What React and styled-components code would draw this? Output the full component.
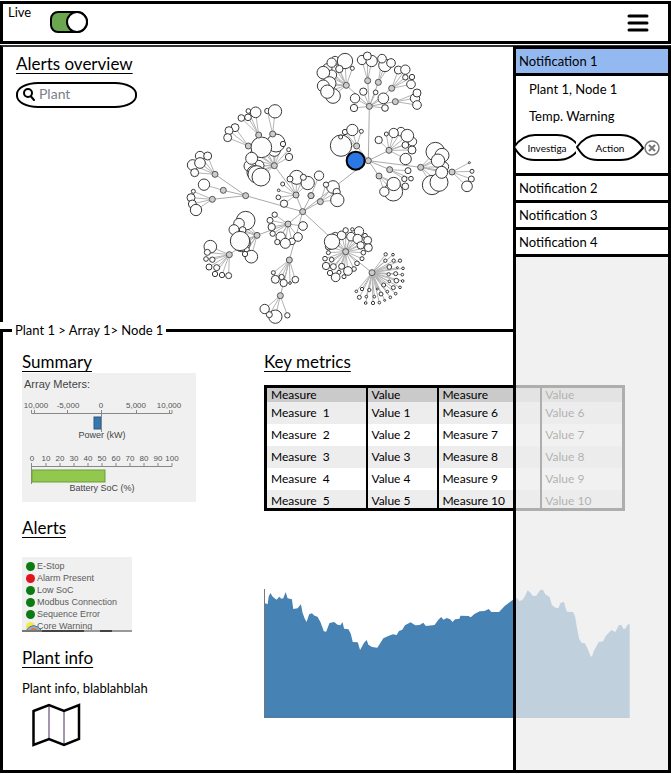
import React, { useState } from 'react';
import styled, { createGlobalStyle } from 'styled-components';

const GlobalStyle = createGlobalStyle`
  * { box-sizing: border-box; }
  body {
    margin: 0;
    background: #fff;
    color: #000;
    font: 13px/16px Lato, "Open Sans", sans-serif;
  }
  button, input { font: inherit; color: inherit; }
`;

const Page = styled.div`
  display: flex;
  flex-direction: column;
  min-height: 100vh;
  padding: 1px 0;
`;

const Header = styled.header`
  display: flex;
  justify-content: space-between;
  align-items: flex-start;
  height: 43px;
  padding: 0 18px 0 5px;
  border: 3px solid #000;
`;

const LiveLabel = styled.label`
  display: flex;
  align-items: flex-start;
  gap: 19px;
`;

const Toggle = styled.input`
  appearance: none;
  display: flex;
  justify-content: flex-end;
  width: 38px;
  height: 22px;
  margin: 7px 0 0;
  border: 2px solid #000;
  border-radius: 8px 11px 11px 8px;
  background: #fff;
  &:checked { background: #6aa84f; }
  &:not(:checked) { justify-content: flex-start; }
  &::before {
    content: '';
    box-sizing: border-box;
    flex: none;
    width: 22px;
    height: 22px;
    margin: -2px;
    border: 2px solid #000;
    border-radius: 50%;
    background: #fff;
  }
`;

const IconButton = styled.button`
  display: flex;
  padding: 0;
  border: 0;
  background: none;
  cursor: pointer;
`;

const MenuButton = styled(IconButton)`
  align-self: center;
`;

const Body = styled.main`
  position: relative;
  flex: 1;
  display: flex;
  flex-direction: column;
  margin-top: 1px;
`;

const Overview = styled.section`
  display: flex;
  height: 277px;
  border-top: 2px solid #333;
  border-left: 3px solid #000;
  border-right: 3px solid #000;
`;

const Search = styled.div`
  flex: 0 0 177px;
  padding: 7px 0 0 13px;
`;

const Heading = styled.h2`
  margin: 0;
  font-size: 17px;
  font-weight: 400;
  line-height: 20px;
  text-decoration: underline;
  text-decoration-skip-ink: none;
  text-underline-offset: 3px;
`;

const SearchBox = styled.label`
  display: flex;
  align-items: center;
  gap: 4px;
  width: 121px;
  height: 26px;
  margin-top: 8px;
  padding: 0 5px 2px;
  border: 2px solid #000;
  border-radius: 22px / 12px;
`;

const SearchInput = styled.input`
  width: 80px;
  padding: 0;
  border: 0;
  outline: 0;
  background: none;
  font-size: 14px;
  &::placeholder { color: #7d7d88; opacity: 1; }
`;

const Graph = styled.svg`
  width: 300px;
  height: 275px;
  overflow: visible;
`;

const Details = styled.fieldset`
  flex: 1;
  min-width: 0;
  margin: 0;
  padding: 14px 38px 20px 19px;
  border: 3px solid #000;
`;

const Legend = styled.legend`
  margin-left: -10px;
  padding: 0 3px;
  font-size: 13px;
  line-height: 16px;
`;

const Columns = styled.div`
  display: grid;
  grid-template-columns: 242px 1fr;
`;

const Column = styled.div`
  display: flex;
  flex-direction: column;
  align-items: flex-start;
`;

const Meters = styled.svg`
  width: 174px;
  height: 129px;
  margin: 1px 0 16px;
  background: #f0f0f0;
  font-family: "Liberation Sans", Arial, sans-serif;
`;

const AlertCard = styled.div`
  position: relative;
  width: 110px;
  height: 75px;
  margin: 19px 0 16px;
  overflow: hidden;
  background: #f0f0f0;
`;

const AlertList = styled.ul`
  margin: 0;
  padding: 3px 4px;
  list-style: none;
  color: #5c5c5c;
  font: 9px/12px "Liberation Sans", Arial, sans-serif;
`;

const AlertItem = styled.li`
  display: flex;
  align-items: center;
  gap: 2px;
  white-space: nowrap;
  &::before {
    content: '';
    width: 9px;
    height: 9px;
    border-radius: 50%;
    background: ${(p) => p.$color};
  }
`;

const CardEdge = styled.svg`
  position: absolute;
  left: 0;
  bottom: 0;
`;

const PlantText = styled.p`
  margin: 12px 0 7px;
`;

const Metrics = styled.table`
  width: calc(100% - 5px);
  margin-top: 13px;
  table-layout: fixed;
  border: 3px solid #000;
  border-spacing: 0;
  font-size: 12px;
  line-height: 14px;
  text-align: left;
  white-space: pre;
`;

const Cell = styled.td`
  height: ${(p) => (p.$last ? 18 : 22)}px;
  padding: ${(p) => (p.$last ? '3px 0 0' : '0 0 0')};
  padding-left: 3px;
  border-left: 2px solid #000;
  &:first-child { padding-left: 4px; border-left: 0; }
`;

const HeadCell = styled.th`
  width: ${(p) => p.$width};
  height: 14px;
  padding: 0 0 0 3px;
  border-left: 2px solid #000;
  background: #cacaca;
  font-weight: 400;
  &:first-child { padding-left: 4px; border-left: 0; }
`;

const Row = styled.tr`
  background: ${(p) => (p.$shaded ? '#ededed' : '#fff')};
`;

const Chart = styled.svg`
  width: 100%;
  height: 130px;
  margin-top: 77px;
`;

const Sidebar = styled.aside`
  position: absolute;
  top: 1px;
  right: 0;
  bottom: 0;
  display: flex;
  flex-direction: column;
  width: 158px;
  border: 3px solid #000;
`;

const Notice = styled.button`
  display: block;
  width: 100%;
  height: 27px;
  padding: 0 0 0 3px;
  border: 0;
  border-bottom: 3px solid #000;
  background: ${(p) => (p.$open ? '#94b9f1' : '#fff')};
  text-align: left;
  cursor: pointer;
`;

const NoticeDetail = styled.div`
  height: 100px;
  border-bottom: 3px solid #000;
  background: #fff;
`;

const NoticeText = styled.p`
  margin: 0;
  padding: 5px 0 6px 13px;
`;

const Actions = styled.div`
  display: flex;
  align-items: center;
  margin: 4px 0 0 -3px;
`;

const LensButton = styled.button`
  position: relative;
  display: block;
  width: 68px;
  height: 27px;
  padding: 0;
  border: 0;
  background: none;
  font-size: 10px;
  cursor: pointer;
`;

const LensOutline = styled.svg`
  position: absolute;
  inset: 0;
`;

const ButtonText = styled.span`
  position: relative;
`;

const Clip = styled.div`
  width: 63px;
  overflow: hidden;
`;

const Veil = styled.div`
  flex: 1;
  background: linear-gradient(#f1f1f1 90px, rgba(236, 236, 236, 0.737) 90px);
`;

/* Node positions are in thirds of a pixel, relative to each group's origin. */
const GROUPS = [
  { dx: 0, dy: 0, hubs: [
    { at: [236, 270], leaves: [[227, 202, 16], [205, 198, 7], [204, 217, 10], [184, 219, 10]] },
    { at: [278, 267], leaves: [[262, 198, 8], [285, 199, 20]] },
    { at: [205, 303], leaves: [[165, 248, 12], [147, 257, 12], [143, 278, 12]] },
    { at: [283, 362], leaves: [[225, 325, 13], [283, 316, 18], [288, 294, 27], [244, 307, 31], [309, 297, 8], [326, 314, 6], [327, 336, 11], [236, 362, 16], [210, 363, 18], [215, 340, 18], [222, 383, 21], [230, 388, 26], [243, 396, 27]] },
    { at: [105, 388], leaves: [[60, 333, 14], [83, 333, 12], [38, 360, 16], [60, 354, 16], [44, 383, 12]] },
  ] },
  { dx: 0, dy: 375, hubs: [
    { at: [197, 77], leaves: [] },
    { at: [130, 61], leaves: [[72, 44, 17]] },
    { at: [97, 88], leaves: [[40, 64, 6], [33, 83, 12], [37, 102, 12], [48, 120, 17]] },
    { at: [348, 75], leaves: [[308, 42, 6], [296, 61, 4], [295, 82, 7], [312, 101, 11], [350, 22, 21], [330, 27, 9], [383, 39, 20], [370, 22, 9]] },
    { at: [393, 77], leaves: [[417, 17, 14]] },
    { at: [324, 162], leaves: [[284, 134, 8], [270, 151, 9], [275, 171, 11], [278, 191, 8], [302, 200, 14], [292, 216, 8], [336, 214, 10], [316, 220, 15], [354, 201, 13], [369, 168, 13]] },
    { at: [231, 196], leaves: [[197, 152, 28], [177, 161, 16], [188, 180, 10], [162, 179, 15], [185, 219, 26], [200, 238, 8], [180, 213, 29], [214, 260, 19], [195, 252, 8]] },
    { at: [148, 254], leaves: [[91, 230, 19], [82, 247, 9], [78, 267, 7], [97, 269, 8], [87, 291, 9], [110, 293, 9], [105, 312, 8], [126, 315, 8], [146, 317, 9]] },
    { at: [328, 270], leaves: [[280, 308, 6], [286, 328, 12], [305, 321, 8], [311, 339, 11], [330, 339, 4], [346, 329, 10]] },
    { at: [301, 377], leaves: [[254, 417, 14], [286, 440, 20], [268, 434, 9], [322, 436, 8]] },
    { at: [368, 125], leaves: [] },
  ] },
  { dx: 360, dy: 0, hubs: [
    { at: [139, 121], leaves: [[82, 70, 14], [105, 47, 13], [95, 53, 14], [135, 48, 23], [118, 72, 11], [157, 70, 6], [95, 90, 15], [70, 83, 19], [88, 115, 20], [70, 123, 18], [99, 153, 22], [82, 140, 20]] },
    { at: [203, 107], leaves: [[186, 45, 14], [215, 48, 17], [202, 33, 12]] },
    { at: [235, 112], leaves: [[255, 61, 19], [246, 41, 13], [273, 54, 13]] },
    { at: [275, 130], leaves: [[295, 75, 12], [316, 74, 14], [316, 97, 8], [336, 96, 8], [333, 118, 13]] },
    { at: [286, 170], leaves: [[345, 160, 14], [351, 144, 12], [351, 180, 13]] },
    { at: [208, 184], leaves: [[190, 140, 11], [227, 142, 7], [250, 160, 16], [255, 189, 10], [165, 160, 14], [162, 189, 11]] },
    { at: [205, 347], leaves: [] },
    { at: [170, 303], leaves: [[123, 302, 32], [122, 276, 6], [135, 261, 8], [157, 255, 17], [184, 259, 6]] },
    { at: [267, 316], leaves: [[236, 285, 11], [259, 267, 6], [303, 260, 13], [281, 264, 14], [337, 290, 13], [322, 272, 19], [316, 300, 10], [336, 315, 12], [317, 342, 17]] },
    { at: [269, 374], leaves: [[324, 377, 9], [313, 402, 8], [333, 401, 7]] },
    { at: [237, 393], leaves: [[280, 440, 28], [253, 440, 14], [281, 417, 20], [316, 424, 10]] },
    { at: [362, 367], leaves: [[406, 320, 28], [426, 331, 21], [432, 365, 14], [414, 347, 20], [396, 420, 29], [417, 412, 27], [425, 382, 18]] },
    { at: [456, 381], leaves: [[508, 353, 3], [516, 379, 6], [514, 402, 9], [501, 424, 16]] },
  ] },
  { dx: 360, dy: 375, hubs: [
    { at: [61, 95], leaves: [[99, 51, 19], [78, 44, 8], [110, 66, 11], [112, 90, 20]] },
    { at: [33, 77], leaves: [] },
    { at: [137, 245], leaves: [[106, 199, 12], [86, 230, 10], [96, 215, 23], [125, 196, 13], [137, 181, 8], [157, 178, 5], [177, 184, 14], [153, 200, 13], [173, 207, 14], [195, 197, 7], [203, 211, 12], [205, 233, 12], [182, 226, 11], [190, 248, 7], [186, 266, 6], [171, 280, 7], [162, 297, 7], [144, 303, 13], [125, 289, 9], [132, 320, 6], [117, 307, 6], [107, 322, 13], [90, 309, 8], [100, 290, 9], [78, 288, 11], [95, 269, 7], [75, 266, 7], [85, 248, 6]] },
    { at: [216, 308], leaves: [[257, 253, 5], [279, 254, 4], [256, 272, 5], [281, 272, 5], [300, 272, 5], [268, 291, 7], [292, 293, 3], [309, 295, 4], [266, 313, 5], [287, 311, 6], [307, 314, 4], [268, 334, 4], [289, 332, 7], [308, 333, 4], [251, 345, 6], [280, 353, 6], [300, 352, 4], [262, 365, 4], [287, 371, 4], [243, 372, 6], [271, 382, 4], [232, 357, 3], [208, 360, 5], [223, 380, 4], [238, 398, 4], [254, 391, 3], [219, 399, 5], [197, 399, 4], [199, 380, 4], [186, 357, 5], [169, 364, 4], [178, 382, 6]] },
  ] },
];

const LINKS = [
  [236, 270, 283, 362], [278, 267, 283, 362], [205, 303, 283, 362], [283, 362, 348, 450],
  [105, 388, 197, 452], [130, 436, 197, 452], [97, 463, 197, 452], [197, 452, 368, 500],
  [348, 450, 368, 500], [393, 452, 368, 500], [421, 470, 368, 500], [324, 537, 368, 500],
  [231, 571, 324, 537], [148, 629, 231, 571], [328, 645, 368, 500], [328, 645, 301, 752],
  [368, 500, 497, 620], [497, 620, 576, 683], [368, 500, 565, 347], [565, 347, 568, 184],
  [568, 184, 499, 121], [568, 184, 563, 107], [568, 184, 595, 112], [568, 184, 635, 130],
  [568, 184, 646, 170], [565, 347, 530, 303], [565, 347, 627, 316], [565, 347, 629, 374],
  [565, 347, 597, 393], [565, 347, 722, 367], [722, 367, 816, 381],
];

function NodeGraph() {
  return (
    <Graph viewBox="0 6 900 825" role="img" aria-label="Plant node network">
      <g stroke="#aaa" strokeWidth="3" fill="none">
        {LINKS.map(([a, b, c, d], i) => <path key={i} d={`M${a} ${b}L${c} ${d}`} />)}
      </g>
      {GROUPS.map((g, i) => (
        <g key={i} transform={`translate(${g.dx} ${g.dy})`}>
          {g.hubs.map((h, j) => (
            <g key={j}>
              <path
                d={h.leaves.map((l) => `M${h.at[0]} ${h.at[1]}L${l[0]} ${l[1]}`).join('')}
                stroke="#b4b4b4" strokeWidth="3" fill="none"
              />
              {h.leaves.map((l, k) => (
                <circle key={k} cx={l[0]} cy={l[1]} r={l[2]} fill="#fdfdfd" stroke="#3a3a3a" strokeWidth="3" />
              ))}
            </g>
          ))}
          {g.hubs.map((h, j) => (
            <circle key={j} cx={h.at[0]} cy={h.at[1]} r="9" fill="#ccc" stroke="#555" strokeWidth="3" />
          ))}
        </g>
      ))}
      <circle cx="527" cy="347" r="27" fill="#2b78e4" stroke="#000" strokeWidth="6" />
    </Graph>
  );
}

function MeterPanel() {
  return (
    <Meters viewBox="0 0 174 129" role="img" aria-label="Array meters">
      <text x="2" y="15" fontSize="11" fill="#444">Array Meters:</text>
      <g fontSize="8" fill="#555" textAnchor="middle">
        <text x="14" y="35">10,000</text>
        <text x="46" y="35">-5,000</text>
        <text x="79" y="35">0</text>
        <text x="114" y="35">5,000</text>
        <text x="147" y="35">10,000</text>
        {[0, 10, 20, 30, 40, 50, 60, 70, 80, 90, 100].map((n) => (
          <text key={n} x={10 + n * 1.4} y="88">{n}</text>
        ))}
      </g>
      <g stroke="#888" fill="none">
        <path d="M9.500 37v3.500h140.500v-3.500M12.500 37v3M45.500 37v3M79.500 37v3M114.500 37v3M147.500 37v3" />
        <path d="M9.500 90v21M9.500 93.500h140.500v-3.500M24 90v3M38 90v3M52 90v3M66 90v3M80 90v3M94 90v3M108 90v3M122 90v3M136 90v3" />
      </g>
      <rect x="72" y="44" width="7" height="12" fill="#3577ae" stroke="#2b5a85" />
      <path d="M79.500 41v18" stroke="#888" />
      <rect x="10" y="97" width="73" height="12" fill="#92c84e" stroke="#6f9b3a" />
      <g fontSize="9" fill="#444" textAnchor="middle">
        <text x="80" y="65">Power (kW)</text>
        <text x="80" y="118">Battery SoC (%)</text>
      </g>
    </Meters>
  );
}

const ALERTS = [
  ['E-Stop', '#0a7a12'], ['Alarm Present', '#e3131b'], ['Low SoC', '#0a7a12'],
  ['Modbus Connection', '#0a7a12'], ['Sequence Error', '#0a7a12'], ['Core Warning', '#f2e94a'],
];

function AlertPanel() {
  return (
    <AlertCard>
      <AlertList>
        {ALERTS.map(([name, color]) => <AlertItem key={name} $color={color}>{name}</AlertItem>)}
      </AlertList>
      <CardEdge width="110" height="8" viewBox="0 0 110 8" aria-hidden="true">
        <path d="M3 8Q11 -5 21 8Z" fill="#8fb0c9" stroke="#5b7690" />
        <path d="M7 8Q11 0 17 8Z" fill="#d9764a" />
        <path d="M0 7h22" stroke="#777" strokeWidth="2" />
        <path d="M20 7h42M78 7h12" stroke="#444" strokeWidth="2" />
        <path d="M62 7h16M90 7h20" stroke="#999" strokeWidth="2" />
      </CardEdge>
    </AlertCard>
  );
}

const AREA =
  'M27 412V68L38 73L41 50L46 39L54 51L65 59L73 50L79 56L85 55L92 36L98 55L111 58L115 87L128 85L138 73L143 98L149 115L155 126L163 103L171 100L179 107L188 110L197 127L207 154L214 155L224 129L238 126L248 134L257 136L263 126L268 146L281 148L288 161L294 186L309 187L316 210L328 188L336 180L341 194L352 201L368 203L386 175L401 168L415 163L426 165L433 153L443 149L451 136L468 127L482 136L495 135L506 128L514 138L540 135L551 120L560 111L567 119L577 114L587 118L594 126L602 118L615 116L618 107L642 108L649 112L660 102L676 94L690 93L703 87L711 96L734 96L751 78L776 59L788 55L795 63L803 61L811 51L820 31L827 37L836 48L846 47L858 30L866 29L873 43L886 51L893 75L904 83L913 84L918 70L929 65L938 95L957 96L963 110L968 141L975 176L982 188L992 190L1000 205L1010 230L1014 228L1019 213L1034 186L1047 184L1055 168L1072 150L1084 156L1094 136L1102 135L1109 148L1115 145L1120 135L1127 131V412Z';

function Lens() {
  return (
    <LensOutline width="68" height="27" viewBox="0 0 68 27" aria-hidden="true">
      <path d="M1 13C6 6 12 1 22 1H44C55 1 62 6 67 14C61 21 56 26 44 26H22C10 26 6 21 1 13Z" fill="#fff" stroke="#000" strokeWidth="2" />
    </LensOutline>
  );
}

export default function App() {
  const [live, setLive] = useState(true);
  const [open, setOpen] = useState(1);
  return (
    <>
      <GlobalStyle />
      <Page>
        <Header>
          <LiveLabel>
            Live
            <Toggle type="checkbox" checked={live} onChange={(e) => setLive(e.target.checked)} />
          </LiveLabel>
          <MenuButton aria-label="Menu">
            <svg width="24" height="20" viewBox="0 0 24 20">
              <path d="M3 3h18M3 10h18M3 17h18" stroke="#000" strokeWidth="3" strokeLinecap="round" />
            </svg>
          </MenuButton>
        </Header>
        <Body>
          <Overview>
            <Search>
              <Heading>Alerts overview</Heading>
              <SearchBox>
                <svg width="12" height="13" viewBox="0 0 12 13" fill="none" stroke="#000" strokeWidth="2">
                  <circle cx="5" cy="5" r="4" />
                  <path d="M8 8.500l3 3.500" strokeLinecap="round" />
                </svg>
                <SearchInput aria-label="Search plants" placeholder="Plant" />
              </SearchBox>
            </Search>
            <NodeGraph />
          </Overview>
          <Details>
            <Legend>Plant 1 &gt; Array 1&gt; Node 1</Legend>
            <Columns>
              <Column>
                <Heading>Summary</Heading>
                <MeterPanel />
                <Heading>Alerts</Heading>
                <AlertPanel />
                <Heading>Plant info</Heading>
                <PlantText>Plant info, blablahblah</PlantText>
                <svg width="64" height="44" viewBox="0 0 64 44" fill="none" role="img" aria-label="Map">
                  <path d="M27 3V37M42 8V42" stroke="#4b2a63" />
                  <path d="M11.500 8L27 2L42 8L57 2V36L42 42L27 36L11.500 42Z" stroke="#000" strokeWidth="2.500" />
                </svg>
              </Column>
              <div>
                <Heading>Key metrics</Heading>
                <Metrics>
                  <thead>
                    <tr>
                      <HeadCell $width="28%">Measure</HeadCell>
                      <HeadCell $width="20%">Value</HeadCell>
                      <HeadCell $width="29%">Measure</HeadCell>
                      <HeadCell $width="23%">Value</HeadCell>
                    </tr>
                  </thead>
                  <tbody>
                    {[1, 2, 3, 4, 5].map((n) => (
                      <Row key={n} $shaded={n % 2 === 1}>
                        <Cell $last={n === 5}>{`Measure  ${n}`}</Cell>
                        <Cell $last={n === 5}>{`Value ${n}`}</Cell>
                        <Cell $last={n === 5}>{`Measure ${n + 5}`}</Cell>
                        <Cell $last={n === 5}>{`Value ${n + 5}`}</Cell>
                      </Row>
                    ))}
                  </tbody>
                </Metrics>
                <Chart viewBox="27 24 1101 390" preserveAspectRatio="none" role="img" aria-label="Power over time">
                  <path d={AREA} fill="#4682b4" />
                  <path d="M28.500 27V412" stroke="#777" strokeWidth="3" />
                  <path d="M27 412H1127" stroke="#356c9c" strokeWidth="3" />
                </Chart>
              </div>
            </Columns>
          </Details>
          <Sidebar>
            <Notice $open={open === 1} onClick={() => setOpen(1)}>Notification 1</Notice>
            <NoticeDetail>
              <NoticeText>Plant 1, Node 1</NoticeText>
              <NoticeText>Temp. Warning</NoticeText>
              <Actions>
                <Clip>
                  <LensButton><Lens /><ButtonText>Investiga</ButtonText></LensButton>
                </Clip>
                <LensButton><Lens /><ButtonText>Action</ButtonText></LensButton>
                <IconButton aria-label="Dismiss">
                  <svg width="16" height="16" viewBox="0 0 16 16" fill="none" stroke="#777">
                    <circle cx="8" cy="8" r="7" strokeWidth="1.500" />
                    <path d="M5 5l6 6M11 5l-6 6" strokeWidth="2" />
                  </svg>
                </IconButton>
              </Actions>
            </NoticeDetail>
            {[2, 3, 4].map((n) => (
              <Notice key={n} $open={open === n} onClick={() => setOpen(n)}>Notification {n}</Notice>
            ))}
            <Veil />
          </Sidebar>
        </Body>
      </Page>
    </>
  );
}
